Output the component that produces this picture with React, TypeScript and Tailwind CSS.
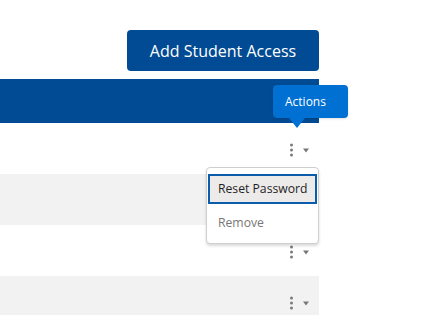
import React from "react";

function Kebab() {
  return (
    <div className="flex items-center gap-[10px] translate-y-[1.5px]">
      <div className="flex flex-col gap-[2px]">
        <span className="block w-[3px] h-[3px] rounded-full bg-[#7a7a7a]" />
        <span className="block w-[3px] h-[3px] rounded-full bg-[#7a7a7a]" />
        <span className="block w-[3px] h-[3px] rounded-full bg-[#7a7a7a]" />
      </div>
      <span className="block w-0 h-0 border-l-[3px] border-r-[3px] border-t-[4px] border-l-transparent border-r-transparent border-t-[#777777]" />
    </div>
  );
}

export default function App() {
  const rows = ["bg-white", "bg-[#f2f2f2]", "bg-white", "bg-[#f2f2f2]"];
  return (
    <div className="w-[430px] h-[315px] bg-white overflow-hidden font-['Open_Sans',sans-serif] relative">
      <div className="w-[319px]">
        <div className="flex justify-end pt-[30px] pb-[8px]">
          <button className="h-[41px] w-[192px] rounded-[4px] bg-[#004b93] text-white text-[16px] leading-none">
            Add Student Access
          </button>
        </div>
        <div className="h-[44px] bg-[#004b93]" />
        {rows.map((c, i) => (
          <div key={i} className={`h-[51px] ${c} flex items-center justify-end pr-[10px]`}>
            <Kebab />
          </div>
        ))}
      </div>

      {/* tooltip */}
      <div className="absolute left-[273px] top-[85px] w-[75px] h-[33px] rounded-[4px] bg-[#0070d2] text-white text-[12px] flex items-center pl-[12px] shadow-sm">
        Actions
      </div>
      <div className="absolute left-[289px] top-[118px] w-0 h-0 border-l-[8px] border-r-[8px] border-t-[10px] border-l-transparent border-r-transparent border-t-[#0070d2]" />

      {/* dropdown */}
      <div className="absolute left-[206px] top-[167px] w-[113px] h-[77px] bg-white border border-[#cfcfcf] rounded-[4px] shadow-[0_2px_3px_rgba(0,0,0,0.15)] pt-[6px] px-[1px]">
        <div className="h-[30px] border-2 border-[#0b5cab] bg-[#ecebea] flex items-center pl-[8px] text-[12.2px] text-[#1f1f1f]">
          Reset Password
        </div>
        <div className="h-[38px] flex items-center pl-[10px] text-[12.2px] text-[#777777]">
          Remove
        </div>
      </div>
    </div>
  );
}
